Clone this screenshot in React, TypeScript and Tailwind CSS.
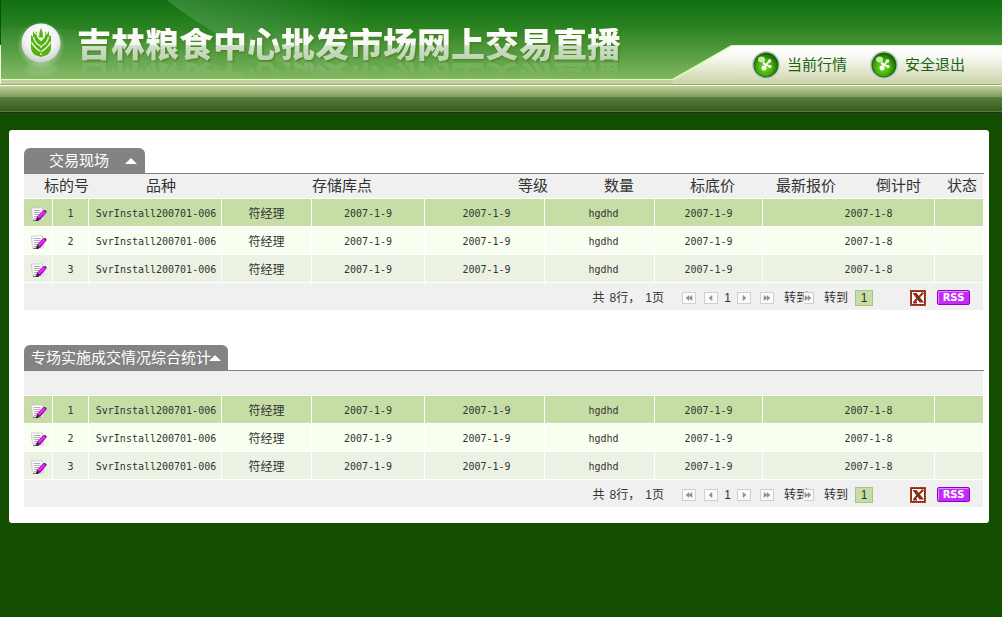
import { useId } from 'react';

const headings = [
  { label: '标的号', span: 2, pad: 'pl-5' },
  { label: '品种', span: 1, pad: 'pl-[57px]' },
  { label: '存储库点', span: 2, pad: 'pl-[90px]' },
  { label: '等级', span: 1, pad: 'pl-[93px]' },
  { label: '数量', span: 1, pad: 'pl-[59px]' },
  { label: '标底价', span: 1, pad: 'pl-[35px]' },
  { label: '最新报价', span: 1, pad: 'pl-[13px]' },
  { label: '倒计时', span: 1, pad: 'pl-[21px]' },
  { label: '状态', span: 1, pad: 'pl-3' },
];

const rows = [
  { id: 1, bg: 'bg-[#c6dda6]' },
  { id: 2, bg: 'bg-[#f8fff0]' },
  { id: 3, bg: 'bg-[#ebf2e3]' },
];

function LogoIcon() {
  return (
    <svg className="h-[58px] w-12 shrink-0" viewBox="0 0 48 58" aria-hidden="true">
      <defs>
        <radialGradient id="ball" cx="50%" cy="35%" r="65%">
          <stop offset="0" stopColor="#ffffff" />
          <stop offset="0.65" stopColor="#f1f1f3" />
          <stop offset="1" stopColor="#c9cfca" />
        </radialGradient>
        <radialGradient id="glow">
          <stop offset="0.6" stopColor="#ffffff" stopOpacity="0.4" />
          <stop offset="1" stopColor="#ffffff" stopOpacity="0" />
        </radialGradient>
      </defs>
      <circle cx="24" cy="25" r="24" fill="url(#glow)" />
      <ellipse cx="24" cy="49" rx="20" ry="8" fill="url(#glow)" opacity="0.3" />
      <circle cx="24" cy="23" r="19.5" fill="url(#ball)" />
      <path
        d="M24 8l1.500 4 .5 5 3-6 .5 4 2.500-4v6l2-2v13q0 4-4 7l-6 2-6-2q-4-3-4-7V15l2 2v-6l2.500 4 .5-4 3 6 .5-5z"
        fill="#55b012"
      />
      <path
        d="M24 17v4M24 26v2M24 33v2M16.500 17q1 6 7 9M31.500 17q-1 6-7 9M14.500 22q2 5 9 9.500M33.500 22q-2 5-9 9.500M20 13q0 4 3.500 7M28 13q0 4-3.500 7"
        stroke="#f5f8ef"
        strokeWidth="1.300"
        fill="none"
      />
    </svg>
  );
}

function OrbIcon() {
  const id = useId();
  return (
    <svg className="size-7 shrink-0" viewBox="0 0 28 28" aria-hidden="true">
      <defs>
        <radialGradient id={id} cx="45%" cy="60%" r="60%">
          <stop offset="0" stopColor="#7be022" />
          <stop offset="0.55" stopColor="#47ad0e" />
          <stop offset="1" stopColor="#146400" />
        </radialGradient>
      </defs>
      <circle cx="14" cy="14" r="14" fill="#c3cbd2" />
      <circle cx="14" cy="14" r="12.500" fill="#1c6a0c" />
      <circle cx="14" cy="14" r="11.500" fill={`url(#${id})`} />
      <ellipse cx="9.500" cy="8.500" rx="3.500" ry="3" fill="#e8ffc8" opacity="0.8" />
      <path d="M12.500 16.500l5-7M12 12.500l5.500 3" stroke="#fff" strokeWidth="1.500" />
      <g fill="#fff">
        <circle cx="12" cy="17" r="2.500" />
        <circle cx="17.500" cy="10" r="1.800" />
        <circle cx="18" cy="15.500" r="1.600" />
        <circle cx="12" cy="12.500" r="1.200" />
      </g>
    </svg>
  );
}

function EditIcon() {
  return (
    <svg className="block h-[15px] w-4" viewBox="0 0 16 15" aria-hidden="true">
      <path d="M0.500 1h11l1 12h-9l-2-1z" fill="#fff" stroke="#c4c0c6" strokeWidth="0.800" />
      <path d="M2.500 3.500h7M2.500 5.500h7M3 7.500h5M3 9.500h3M3 11.500h2" stroke="#9a9a9a" strokeWidth="0.800" />
      <path d="M2 13.500h6" stroke="#77707a" />
      <path d="M5 14l.8-4 6.200-6.500q3-1.300 3.800 1.500L9.500 12.500z" fill="#6d1177" />
      <path d="M7.500 10.500l6.200-6" stroke="#ee22ff" strokeWidth="3" />
      <path d="M5 14l.6-2.500 2 1.800z" fill="#222" />
    </svg>
  );
}

function ExcelIcon() {
  return (
    <svg className="block size-4" viewBox="0 0 16 16" shapeRendering="crispEdges" aria-hidden="true">
      <rect width="16" height="16" fill="#8d2b12" />
      <rect x="0.500" y="0.500" width="15" height="15" fill="none" stroke="#bf5a3c" strokeDasharray="1 1" />
      <rect x="2" y="2" width="12" height="12" fill="#fff" />
      <g shapeRendering="geometricPrecision">
        <path d="M2.500 3h4l7.500 9.500H9.500z" fill="#8d2b12" />
        <path d="M13 3L4.500 11.500M3 12.500h4M11 3.500h2.500" stroke="#8d2b12" strokeWidth="1.800" />
      </g>
    </svg>
  );
}

const arrows = {
  first: 'M7 3v5L4 5.500zM10 3v5L7 5.500z',
  prev: 'M8 3v5L5 5.500z',
  next: 'M6 3v5l3-2.500z',
  last: 'M4 3v5l3-2.500zM7 3v5l3-2.500z',
};

function PageButton({ kind, label }: { kind: keyof typeof arrows; label: string }) {
  return (
    <button type="button" aria-label={label} className="h-3 w-3.5 shrink-0 border border-[#cfcfcf] bg-[#fafafa]">
      <svg className="block h-full w-full" viewBox="1 0.500 12 10" aria-hidden="true">
        <path d={arrows[kind]} fill="#8f8f8f" stroke="#8f8f8f" strokeWidth="0.500" />
      </svg>
    </button>
  );
}

function Pager() {
  const id = useId();
  return (
    <div className="flex h-[27px] items-center justify-end bg-[#f0f0f0] pt-0.5 pr-[13px] text-xs whitespace-nowrap">
      <p className="flex gap-[5px]">
        <span>共</span>
        <span>8行，</span>
        <span>1页</span>
      </p>
      <div className="ml-[18px] flex items-center">
        <PageButton kind="first" label="首页" />
        <span className="w-2" />
        <PageButton kind="prev" label="上一页" />
        <span className="w-[19px] text-center">1</span>
        <PageButton kind="next" label="下一页" />
        <span className="w-[9px]" />
        <PageButton kind="last" label="末页" />
      </div>
      <span className="ml-2.5">转到</span>
      <button type="button" aria-label="转到" className="relative -ml-1 h-3 w-2.5 border border-l-0 border-[#cfcfcf] bg-[#fafafa]">
        <svg className="block h-full w-full" viewBox="3 0.500 9 10" aria-hidden="true">
          <path d={arrows.last} fill="#8f8f8f" stroke="#8f8f8f" strokeWidth="0.500" />
        </svg>
      </button>
      <label htmlFor={id} className="ml-2.5">
        转到
      </label>
      <input
        id={id}
        defaultValue="1"
        className="ml-[7px] h-4 w-[18px] border border-[#a9c488] bg-[#c6dda6] text-center text-xs leading-3"
      />
      <button type="button" aria-label="Excel" className="ml-[37px]">
        <ExcelIcon />
      </button>
      <button
        type="button"
        className="ml-[11px] h-[15px] w-[33px] rounded-xs border border-[#8d00c4] bg-[#c32cf8] font-['DejaVu_Sans'] text-[10px] leading-3 font-bold text-white shadow-[inset_1px_1px_0_#e48cff]"
      >
        RSS
      </button>
    </div>
  );
}

function Section({ title, wide, showHeadings }: { title: string; wide?: boolean; showHeadings?: boolean }) {
  return (
    <section>
      <div className="flex border-b border-[#838383]">
        <h2>
          <button
            type="button"
            className={`flex h-[25px] items-center rounded-t-md bg-[#838383] text-[15px] leading-6 text-white ${wide ? 'pr-[7px] pl-[7px]' : 'pr-2 pl-[25px]'}`}
          >
            {title}
            <svg className={wide ? '-ml-0.5 h-1.5 w-3' : 'ml-4 h-1.5 w-3'} viewBox="0 0 12 6" aria-hidden="true">
              <path d="M6 0l6 6H0z" fill="#fff" />
            </svg>
          </button>
        </h2>
      </div>
      <div className="mr-px">
        <table className="w-full table-fixed border-separate border-spacing-0">
          <colgroup>
            <col className="w-[29px]" />
            <col className="w-9" />
            <col className="w-[133px]" />
            <col className="w-[90px]" />
            <col className="w-[113px]" />
            <col className="w-[120px]" />
            <col className="w-[110px]" />
            <col className="w-[108px]" />
            <col className="w-[92px]" />
            <col className="w-20" />
            <col className="w-12" />
          </colgroup>
          <thead>
            <tr className="h-[25px] bg-[#f0f0f0] text-left text-[15px] leading-6 whitespace-nowrap *:border-b *:border-white">
              {showHeadings ? (
                headings.map((h) => (
                  <th key={h.label} colSpan={h.span} className={`py-0 pr-0 font-normal ${h.pad}`}>
                    {h.label}
                  </th>
                ))
              ) : (
                <td colSpan={11} />
              )}
            </tr>
          </thead>
          <tbody className="text-center font-['DejaVu_Sans_Mono','Noto_Sans_CJK_SC',monospace] text-[10px] leading-4">
            {rows.map((row) => (
              <tr
                key={row.id}
                className={`h-7 ${row.bg} *:border-r *:border-b *:border-white *:p-0 *:pt-0.5 *:last:border-r-0`}
              >
                <td>
                  <button type="button" aria-label="编辑" className="flex w-full justify-center pt-0.5 pl-0.5">
                    <EditIcon />
                  </button>
                </td>
                <td>{row.id}</td>
                <td>
                  <span className="pl-0.5">SvrInstall200701-006</span>
                </td>
                <td className="text-xs">符经理</td>
                <td>2007-1-9</td>
                <td>
                  <span className="pl-1">2007-1-9</span>
                </td>
                <td>
                  <span className="pl-2">hgdhd</span>
                </td>
                <td>2007-1-9</td>
                <td colSpan={2}>
                  <span className="pl-10">2007-1-8</span>
                </td>
                <td />
              </tr>
            ))}
          </tbody>
        </table>
        <Pager />
      </div>
    </section>
  );
}

export default function App() {
  return (
    <div className="min-h-screen bg-[#124d00] font-['Liberation_Sans','Noto_Sans_CJK_SC',sans-serif] text-[#333]">
      <header>
        <div className="relative flex h-[84px] items-end justify-between bg-[linear-gradient(#0f700f_0,#2b8322_28px,#80b760_79px,#dcffb4_79px,#dcffb4_80px,#c9d2a3_80px,#c4cd9c_84px)]">
          <div className="absolute inset-y-0 left-0 w-px bg-[linear-gradient(#0c4f08_45px,#efffd8_45px)]" />
          <svg className="absolute inset-0 h-full w-[500px]" viewBox="0 0 500 84" aria-hidden="true">
            <defs>
              <linearGradient id="swoosh" x1="0" y1="0" x2="1" y2="0">
                <stop offset="0" stopColor="#fff" stopOpacity="0.16" />
                <stop offset="0.6" stopColor="#fff" stopOpacity="0" />
              </linearGradient>
            </defs>
            <path d="M167 0C210 35 270 64 340 79H500V0z" fill="url(#swoosh)" />
            <path d="M0 27C90 24 180 45 250 79H0z" fill="#fff" opacity="0.04" />
          </svg>
          <div className="relative flex items-end self-start pt-5 pl-[17px]">
            <LogoIcon />
            <h1 className="mb-4 ml-3 bg-[linear-gradient(#ffffff_0,#f4f7f2_50%,#cfdfca_52%,#b9d3ae_100%)] bg-clip-text text-[34px] leading-[34px] font-black whitespace-nowrap text-transparent drop-shadow-[1px_1px_1px_#4a7d12] [-webkit-box-reflect:below_-2px_linear-gradient(transparent_55%,rgba(255,255,255,0.25))]">
              吉林粮食中心批发市场网上交易直播
            </h1>
          </div>
          <div className="relative flex h-[39px] shrink-0">
            <svg className="h-[39px] w-[60px]" viewBox="0 0 60 39" aria-hidden="true">
              <defs>
                <linearGradient id="slope" x1="0" y1="0" x2="0" y2="1">
                  <stop offset="0" stopColor="#ffffff" />
                  <stop offset="0.3" stopColor="#f8f9f3" />
                  <stop offset="1" stopColor="#ccd4a8" />
                </linearGradient>
              </defs>
              <path d="M60 0L1 34.500V39H60z" fill="url(#slope)" />
              <path d="M60 0.500L1 34.500" stroke="#dcffb4" strokeWidth="1.500" />
            </svg>
            <nav className="flex items-center gap-[23px] border-t border-[#dcffb4] bg-[linear-gradient(#ffffff,#f8f9f3_30%,#ccd4a8)] pr-[37px] pl-5 text-[15px] text-[#1b6314]">
              <a href="#" className="flex items-center gap-[7px]">
                <OrbIcon />
                当前行情
              </a>
              <a href="#" className="flex items-center gap-[7px]">
                <OrbIcon />
                安全退出
              </a>
            </nav>
          </div>
        </div>
        <div className="h-[29px] bg-[linear-gradient(#9baa78_0,#9baa78_1px,#efffd0_1px,#efffd0_2px,#c5d09f_2px,#7f9b5c_13px,#57803f_13px,#3c581f_27px,#3f8a20_27px,#3f8a20_28px,#2c2433_28px)]" />
      </header>
      <main className="mt-[17px] mr-[13px] ml-[9px] flex flex-col gap-[35px] rounded-[3px] bg-white pt-[18px] pr-[5px] pb-4 pl-[15px]">
        <Section title="交易现场" showHeadings />
        <Section title="专场实施成交情况综合统计" wide />
      </main>
    </div>
  );
}
